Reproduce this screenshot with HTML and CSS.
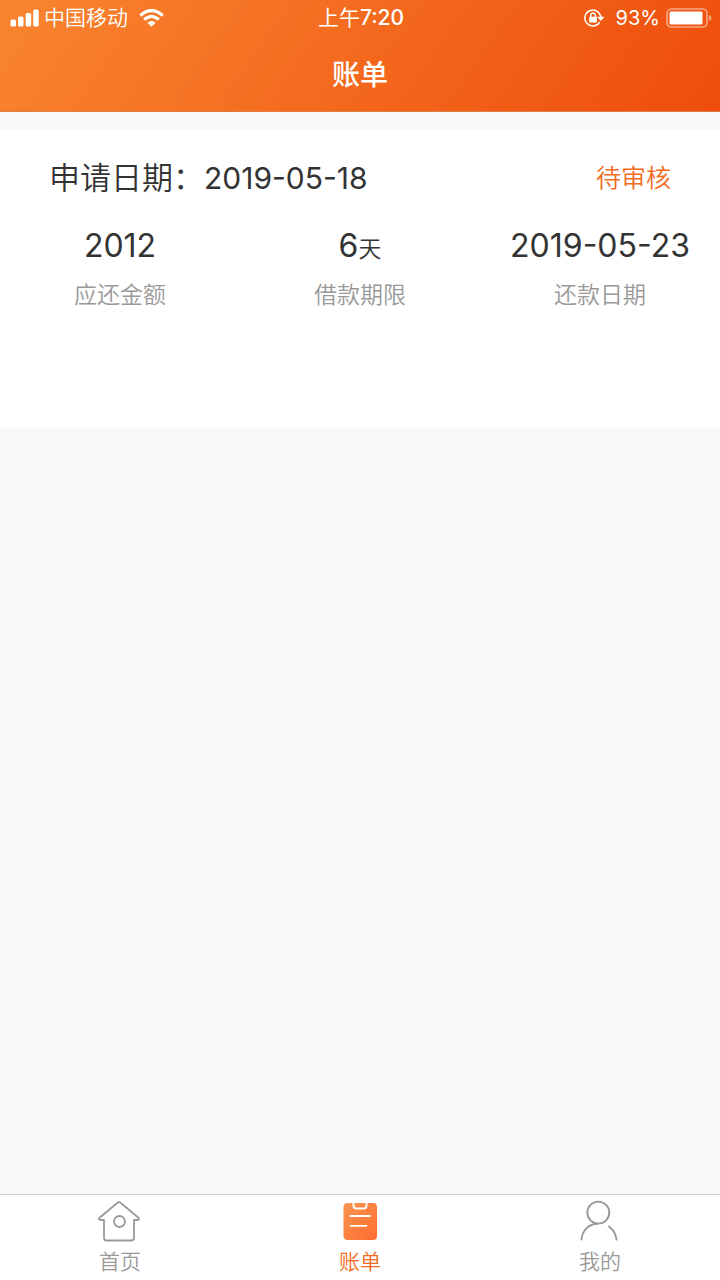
FILE: index.html
```html
<!DOCTYPE html>
<html lang="zh-CN">
<head>
<meta charset="utf-8">
<meta name="viewport" content="width=device-width, initial-scale=1">
<title>账单</title>
<link rel="stylesheet" href="styles.css">
</head>
<body>
<div class="app">
  <header class="header">
    <div class="status">
      <div class="status-left">
        <svg class="signal" width="29" height="18" viewBox="0 0 29 18" fill="currentColor" aria-hidden="true">
          <rect x="0.500" y="10.500" width="5.500" height="7" rx="1.500"/><rect x="8" y="7.500" width="5.500" height="10" rx="1.500"/><rect x="15.700" y="4" width="5.500" height="13.500" rx="1.500"/><rect x="23.200" y="0.500" width="5.500" height="17" rx="1.500"/>
        </svg>
        <span>中国移动</span>
        <svg class="wifi" width="25" height="18" viewBox="0 0 25 18" aria-hidden="true">
          <path d="M1.300 6.400Q12.500-3.400 23.700 6.400M5.200 10.600Q12.500 4.200 19.800 10.600" fill="none" stroke="currentColor" stroke-width="3.300"/>
          <path d="M8.400 13.700Q12.500 10.200 16.600 13.700L12.500 17.800Z" fill="currentColor"/>
        </svg>
      </div>
      <time class="clock">上午<b>7:20</b></time>
      <div class="status-right">
        <svg width="21" height="18" viewBox="0 0 21 18" fill="none" stroke="currentColor" aria-hidden="true">
          <path d="M15.700 13.200A8 8 0 1 1 16.800 8" stroke-width="1.500"/>
          <path d="M13 7.800H20.500L16.800 12Z" fill="currentColor" stroke="none"/>
          <rect x="5.200" y="7.700" width="7.800" height="5.800" rx="0.800" fill="currentColor" stroke="none"/>
          <path d="M6.800 8V6.300a2.300 2.300 0 0 1 4.600 0V8" stroke-width="1.400"/>
        </svg>
        <span class="percent">93%</span>
        <svg width="46" height="20" viewBox="0 0 46 20" aria-hidden="true">
          <rect x="1" y="1" width="40" height="18" rx="4.500" fill="none" stroke="#fff" stroke-opacity=".5" stroke-width="1.600"/>
          <rect x="3.500" y="3.500" width="33" height="13" rx="1.500" fill="#fff"/>
          <path d="M43 7Q45.500 8 45.500 10T43 13Z" fill="#fff" fill-opacity=".5"/>
        </svg>
      </div>
    </div>
    <h1 class="title">账单</h1>
  </header>

  <main class="content">
    <article class="bill">
      <div class="bill-head">
        <h2 class="apply-date">申请日期：<time datetime="2019-05-18">2019-05-18</time></h2>
        <span class="state">待审核</span>
      </div>
      <dl class="figures">
        <div class="figure"><dt>应还金额</dt><dd>2012</dd></div>
        <div class="figure"><dt>借款期限</dt><dd>6<small>天</small></dd></div>
        <div class="figure"><dt>还款日期</dt><dd>2019-05-23</dd></div>
      </dl>
    </article>
  </main>

  <nav class="tabs">
    <a class="tab" href="#home">
      <svg width="44" height="44" viewBox="0 0 44 44" fill="none" stroke="currentColor" stroke-width="1.800" stroke-linejoin="round" aria-hidden="true">
        <path d="M19.500 2.800Q21 1.500 22.500 2.800L40.500 17.700Q42.200 19.800 39 20H36V37.500Q36 40.500 33.500 40.500H8.500Q6 40.500 6 37.500V20H3Q-.2 19.800 1.500 17.700Z"/>
        <circle cx="21.500" cy="21.500" r="5.500"/>
      </svg>
      <span>首页</span>
    </a>
    <a class="tab active" href="#bills" aria-current="page">
      <svg width="44" height="44" viewBox="0 0 44 44" aria-hidden="true">
        <defs><linearGradient id="sheet" x1="0" y1="0" x2="1" y2="1"><stop offset="0" stop-color="#f99550"/><stop offset="1" stop-color="#ff6c30"/></linearGradient></defs>
        <rect x="5.500" y="3" width="33.500" height="37" rx="4" fill="url(#sheet)"/>
        <path d="M15.500 2.500V5.500Q15.500 8.500 18.500 8.500H25.500Q28.500 8.500 28.500 5.500V2.500" fill="none" stroke="#fff" stroke-width="2"/>
        <path d="M12.500 16H32M12.500 25.800H28.500" stroke="#fff" stroke-width="1.800" stroke-linecap="round"/>
      </svg>
      <span>账单</span>
    </a>
    <a class="tab" href="#me">
      <svg width="44" height="44" viewBox="0 0 44 44" fill="none" stroke="currentColor" stroke-width="1.900" stroke-linecap="round" aria-hidden="true">
        <circle cx="20.300" cy="12.600" r="11"/>
        <path d="M3.500 39.500C4 30.500 11 24 19 23.700M31 26.500Q37.500 31.500 38.500 39.500"/>
      </svg>
      <span>我的</span>
    </a>
  </nav>
</div>
</body>
</html>
```
FILE: styles.css
```css
* { box-sizing: border-box; }

body {
  margin: 0;
  background: #f9f9f9;
  color: #333;
  font-family: Inter, "Noto Sans CJK SC", sans-serif;
  font-weight: 400;
}

h1, h2, dl, dd { margin: 0; }
svg { display: block; flex: none; }

.app {
  min-height: 100vh;
  display: flex;
  flex-direction: column;
}

.header {
  background: linear-gradient(125deg, #f98530, #ee4d0b);
  border-bottom: 1px solid #df7d49;
  color: #fff;
}

.status {
  display: grid;
  grid-template-columns: 1fr auto 1fr;
  align-items: center;
  height: 36px;
  padding: 0 8px 0 10px;
  font-size: 21px;
  line-height: 36px;
}

.status-left, .status-right {
  display: flex;
  align-items: center;
}
.signal { margin-right: 5px; }
.status-left { font-weight: 350; }
.wifi { margin-left: 11px; }
.status-right { justify-content: flex-end; gap: 6px; }
.percent { margin-left: 5px; font-size: 20px; }
.clock b { font-weight: 500; }

.title {
  padding-top: 7px;
  padding-bottom: 4px;
  text-align: center;
  font-size: 28px;
  font-weight: 500;
  line-height: 64px;
}

.content {
  flex: 1;
  padding-top: 18px;
}

.bill {
  min-height: 298px;
  padding-top: 24px;
  background: #fff;
}

.bill-head {
  display: flex;
  justify-content: space-between;
  align-items: center;
  padding: 0 49px;
  line-height: 48px;
}
.apply-date { font-size: 31px; font-weight: 350; }
.apply-date time { font-size: 30px; font-weight: 400; }
.state { color: #f26b21; font-size: 25px; font-weight: 350; }

.figures {
  display: grid;
  grid-template-columns: repeat(3, 1fr);
  align-items: start;
  padding-top: 20px;
}
.figure {
  display: flex;
  flex-direction: column-reverse;
  gap: 1px;
  text-align: center;
}
.figure dt { color: #999; font-size: 23px; font-weight: 350; line-height: 48px; }
.figure dd { font-size: 32px; line-height: 48px; }
.figure small { font-size: 23px; font-weight: 350; line-height: 1; }

.tabs {
  display: grid;
  grid-template-columns: repeat(3, 1fr);
  border-top: 1px solid #ccc;
  background: #fff;
}
.tab {
  display: flex;
  flex-direction: column;
  align-items: center;
  padding: 5px 0 0;
  color: #999;
  font-size: 21px;
  font-weight: 350;
  line-height: 36px;
  text-decoration: none;
}
.tab.active { color: #f26b21; }
```
